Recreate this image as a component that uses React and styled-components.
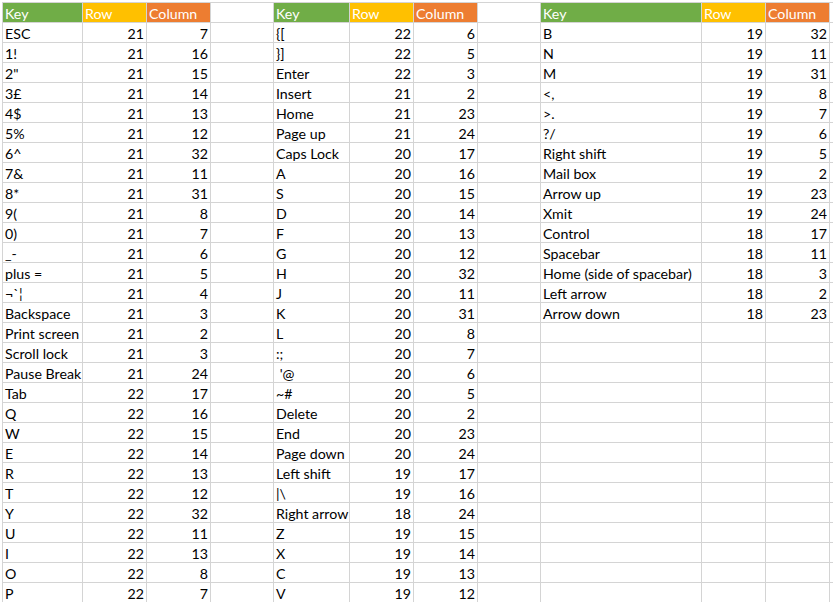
import React from "react";
import styled, { createGlobalStyle } from "styled-components";

const Global = createGlobalStyle`
  html, body { margin: 0; padding: 0; background: #fff; }
  body { font-family: Lato, "Open Sans", sans-serif; overflow: hidden; }
`;

const t1 = [
  ["ESC", 21, 7], ["1!", 21, 16], ['2"', 21, 15], ["3£", 21, 14], ["4$", 21, 13],
  ["5%", 21, 12], ["6^", 21, 32], ["7&", 21, 11], ["8*", 21, 31], ["9(", 21, 8],
  ["0)", 21, 7], ["_-", 21, 6], ["plus =", 21, 5], ["¬`¦", 21, 4], ["Backspace", 21, 3],
  ["Print screen", 21, 2], ["Scroll lock", 21, 3], ["Pause Break", 21, 24], ["Tab", 22, 17],
  ["Q", 22, 16], ["W", 22, 15], ["E", 22, 14], ["R", 22, 13], ["T", 22, 12],
  ["Y", 22, 32], ["U", 22, 11], ["I", 22, 13], ["O", 22, 8], ["P", 22, 7],
];
const t2 = [
  ["{[", 22, 6], ["}]", 22, 5], ["Enter", 22, 3], ["Insert", 21, 2], ["Home", 21, 23],
  ["Page up", 21, 24], ["Caps Lock", 20, 17], ["A", 20, 16], ["S", 20, 15], ["D", 20, 14],
  ["F", 20, 13], ["G", 20, 12], ["H", 20, 32], ["J", 20, 11], ["K", 20, 31],
  ["L", 20, 8], [":;", 20, 7], ["\u00a0'@", 20, 6], ["~#", 20, 5], ["Delete", 20, 2],
  ["End", 20, 23], ["Page down", 20, 24], ["Left shift", 19, 17], ["|\\", 19, 16],
  ["Right arrow", 18, 24], ["Z", 19, 15], ["X", 19, 14], ["C", 19, 13], ["V", 19, 12],
];
const t3 = [
  ["B", 19, 32], ["N", 19, 11], ["M", 19, 31], ["<,", 19, 8], [">.", 19, 7],
  ["?/", 19, 6], ["Right shift", 19, 5], ["Mail box", 19, 2], ["Arrow up", 19, 23],
  ["Xmit", 19, 24], ["Control", 18, 17], ["Spacebar", 18, 11],
  ["Home (side of spacebar)", 18, 3], ["Left arrow", 18, 2], ["Arrow down", 18, 23],
];

const TOTAL_ROWS = 30;

const Sheet = styled.div`
  margin: 2px 0 0 2px;
  display: grid;
  grid-template-columns: 79px 63px 63px 62px 75px 63px 63px 62px 160px 63px 63px 10px;
  grid-auto-rows: 19px;
  gap: 1px;
  padding: 1px 0 0 1px;
  background: #d4d4d4;
  width: max-content;
`;

const fills = { key: "#70ad47", row: "#ffc000", col: "#ed7d31" };

const Cell = styled.div`
  background: ${(p) => (p.$fill ? fills[p.$fill] : "#fff")};
  color: ${(p) => (p.$fill ? "#fff" : "#000")};
  font-size: 14.2px;
  line-height: 17px;
  display: flex;
  align-items: flex-end;
  justify-content: ${(p) => (p.$num ? "flex-end" : "flex-start")};
  padding: 0 2px 0 2px;
  white-space: pre;
  overflow: visible;
`;

function buildRow(r) {
  const cells = [];
  const tables = [t1, t2, t3];
  tables.forEach((tbl, ti) => {
    if (r === 0) {
      cells.push(<Cell key={`h${ti}k`} $fill="key">Key</Cell>);
      cells.push(<Cell key={`h${ti}r`} $fill="row">Row</Cell>);
      cells.push(<Cell key={`h${ti}c`} $fill="col">Column</Cell>);
    } else {
      const d = tbl[r - 1];
      cells.push(<Cell key={`${ti}k`}>{d ? d[0] : ""}</Cell>);
      cells.push(<Cell key={`${ti}r`} $num>{d ? d[1] : ""}</Cell>);
      cells.push(<Cell key={`${ti}c`} $num>{d ? d[2] : ""}</Cell>);
    }
    cells.push(<Cell key={`${ti}gap`} />);
  });
  return cells;
}

export default function App() {
  const rows = [];
  for (let r = 0; r < TOTAL_ROWS; r++) {
    rows.push(<React.Fragment key={r}>{buildRow(r)}</React.Fragment>);
  }
  return (
    <>
      <Global />
      <Sheet>{rows}</Sheet>
    </>
  );
}
